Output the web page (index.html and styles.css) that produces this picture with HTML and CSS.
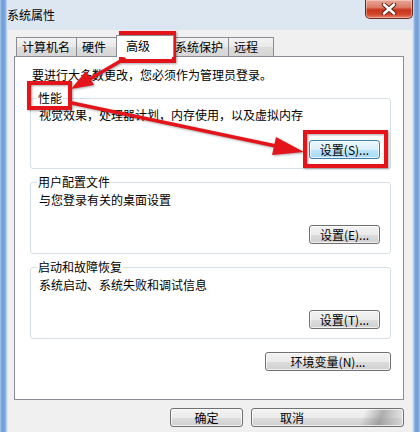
FILE: index.html
```html
<!DOCTYPE html>
<html lang="zh-CN">
<head>
<meta charset="utf-8">
<title>系统属性</title>
<link rel="stylesheet" href="styles.css">
</head>
<body>
<div class="window">
  <div class="titlebar">
    <span class="title">系统属性</span>
    <div class="close">
      <svg width="16" height="12" viewBox="0 0 16 12">
        <path d="M3 1.5 L13 10.5 M13 1.5 L3 10.5" stroke="#5a1a10" stroke-width="4.4" stroke-linecap="round"/>
        <path d="M3 1.5 L13 10.5 M13 1.5 L3 10.5" stroke="#ffffff" stroke-width="2.6" stroke-linecap="round"/>
      </svg>
    </div>
  </div>
  <div class="client">
    <div class="tabs">
      <div class="tab tab-name">计算机名</div>
      <div class="tab tab-hw">硬件</div>
      <div class="tab tab-adv active">高级</div>
      <div class="tab tab-prot">系统保护</div>
      <div class="tab tab-remote">远程</div>
    </div>
    <div class="panel">
      <p class="note">要进行大多数更改，您必须作为管理员登录。</p>
      <fieldset class="group group-first">
        <legend>性能</legend>
        <p class="desc">视觉效果，处理器计划，内存使用，以及虚拟内存</p>
        <div class="btnrow"><button class="btn btn-set hot">设置(S)...</button></div>
      </fieldset>
      <fieldset class="group">
        <legend>用户配置文件</legend>
        <p class="desc">与您登录有关的桌面设置</p>
        <div class="btnrow"><button class="btn btn-set">设置(E)...</button></div>
      </fieldset>
      <fieldset class="group">
        <legend>启动和故障恢复</legend>
        <p class="desc">系统启动、系统失败和调试信息</p>
        <div class="btnrow"><button class="btn btn-set">设置(T)...</button></div>
      </fieldset>
      <div class="envrow"><button class="btn btn-env">环境变量(N)...</button></div>
    </div>
    <div class="footer">
      <button class="btn btn-ok">确定</button>
      <button class="btn btn-cancel">取消</button>
    </div>
  </div>
  <svg class="annot" width="420" height="432" viewBox="0 0 420 432">
    <g fill="none" stroke="#e3151b" stroke-width="4">
      <rect x="121" y="33" width="53" height="28"/>
      <rect x="29" y="83" width="41" height="25"/>
      <rect x="305" y="132" width="81" height="34"/>
    </g>
    <g stroke="#e3151b" stroke-linecap="round">
      <line x1="124" y1="59" x2="88" y2="80" stroke-width="3.5"/>
      <line x1="72" y1="103" x2="276" y2="146" stroke-width="3.5"/>
    </g>
    <g fill="#e3151b">
      <polygon points="71,89 94,85 86,71"/>
      <polygon points="304,152 272,155 276,137"/>
    </g>
  </svg>
</div>
</body>
</html>
```

FILE: styles.css
```css
* { box-sizing: border-box; }
html, body { margin: 0; padding: 0; background: #fff; }
body {
  font-family: "Noto Sans CJK SC", "DejaVu Sans", sans-serif;
  font-size: 12px;
  color: #000;
}
.window {
  position: relative;
  width: 420px;
  height: 432px;
  overflow: hidden;
  padding: 0 8px;
  display: flex;
  flex-direction: column;
  background:
    linear-gradient(90deg, #aac6e8 0, #6f9fd9 2px, #79a6dc 5px, #cfdff1 7px, #e6eef7 8px) left top / 8px 100% no-repeat,
    linear-gradient(270deg, #aac6e8 0, #6f9fd9 2px, #79a6dc 5px, #cfdff1 7px, #e6eef7 8px) right top / 8px 100% no-repeat,
    linear-gradient(#dde7f2, #cbdbec);
}
.titlebar {
  height: 30px;
  flex: none;
  display: flex;
  justify-content: space-between;
  align-items: flex-start;
}
.title {
  line-height: 16px;
  margin-top: 7px;
  margin-left: -1px;
}
.close {
  width: 48px;
  height: 19px;
  margin-right: -1px;
  border: 1px solid #6b2a1f;
  border-top: none;
  border-radius: 0 0 5px 5px;
  background: linear-gradient(#e9a596 0, #dc7d69 40%, #c7341b 55%, #d2472c 80%, #e5826a 100%);
  box-shadow: inset 0 0 0 1px rgba(255,255,255,.35);
  display: flex;
  align-items: center;
  justify-content: center;
}
.close svg { display: block; }
.client {
  flex: 1;
  background: #f0f0f0;
  padding: 5px 8px 0 6px;
  display: flex;
  flex-direction: column;
}
.tabs {
  display: flex;
  align-items: flex-end;
  padding-left: 2px;
  height: 21px;
  flex: none;
}
.tab {
  height: 19px;
  line-height: 17px;
  padding-left: 5px;
  border: 1px solid #898c95;
  border-bottom: none;
  background: linear-gradient(#f3f3f3, #e9e9e9 50%, #dcdcdc 51%, #d6d6d6);
  white-space: nowrap;
  margin-right: -1px;
}
.tab-name { width: 61px; }
.tab-hw { width: 43px; }
.tab-adv { width: 58px; }
.tab-prot { width: 58px; padding-left: 3px; }
.tab-remote { width: 46px; }
.tab.active {
  height: 22px;
  line-height: 19px;
  margin: 0 -3px -1px -2px;
  padding-left: 9px;
  background: #fff;
  position: relative;
  z-index: 1;
}
.panel {
  height: 344px;
  flex: none;
  background: #fff;
  border: 1px solid #898c95;
  padding: 10px 12px 0 15px;
}
.note {
  margin: 0;
  padding-left: 2px;
  line-height: 16px;
}
.group {
  margin: 5px 0 0 0;
  padding: 0 10px 9px 8px;
  border: 1px solid #d5dfe5;
  border-radius: 3px;
  min-width: 0;
}
.group-first { margin-top: 7px; }
.group legend {
  padding: 0 1px;
  margin-left: -2px;
  line-height: 16px;
}
.desc {
  margin: 2px 0 0;
  line-height: 16px;
}
.group-first .desc { margin-top: 1px; }
.btnrow {
  display: flex;
  justify-content: flex-end;
  margin-top: 17px;
}
.envrow {
  display: flex;
  justify-content: flex-end;
  margin-top: 13px;
}
.btn {
  font-family: inherit;
  font-size: 12px;
  color: #000;
  height: 19px;
  line-height: 17px;
  padding: 0;
  border: 1px solid #707070;
  border-radius: 3px;
  background: linear-gradient(#f2f2f2, #ebebeb 50%, #dddddd 51%, #cfcfcf);
  box-shadow: inset 0 0 0 1px rgba(255,255,255,.7);
  white-space: nowrap;
}
.btn.hot {
  border-color: #3c7fb1;
  background: linear-gradient(#eaf6fd, #d9f0fc 50%, #bee6fd 51%, #a7d9f5);
}
.btn-set { width: 71px; }
.btn-env { width: 126px; }
.btn-ok { width: 73px; }
.btn-cancel {
  width: 153px;
  text-align: left;
  padding-left: 28px;
  background:
    linear-gradient(110deg, transparent 0 72%, rgba(110,110,110,.5) 84%, rgba(150,150,150,.35) 92%, rgba(235,235,235,.2) 100%),
    linear-gradient(#f2f2f2, #ebebeb 50%, #dddddd 51%, #cfcfcf);
}
.footer {
  display: flex;
  justify-content: flex-end;
  gap: 8px;
  margin-top: 8px;
}
.annot {
  position: absolute;
  left: 0;
  top: 0;
  pointer-events: none;
  filter: drop-shadow(1px 1px 1px rgba(0,0,0,.35));
}
```
